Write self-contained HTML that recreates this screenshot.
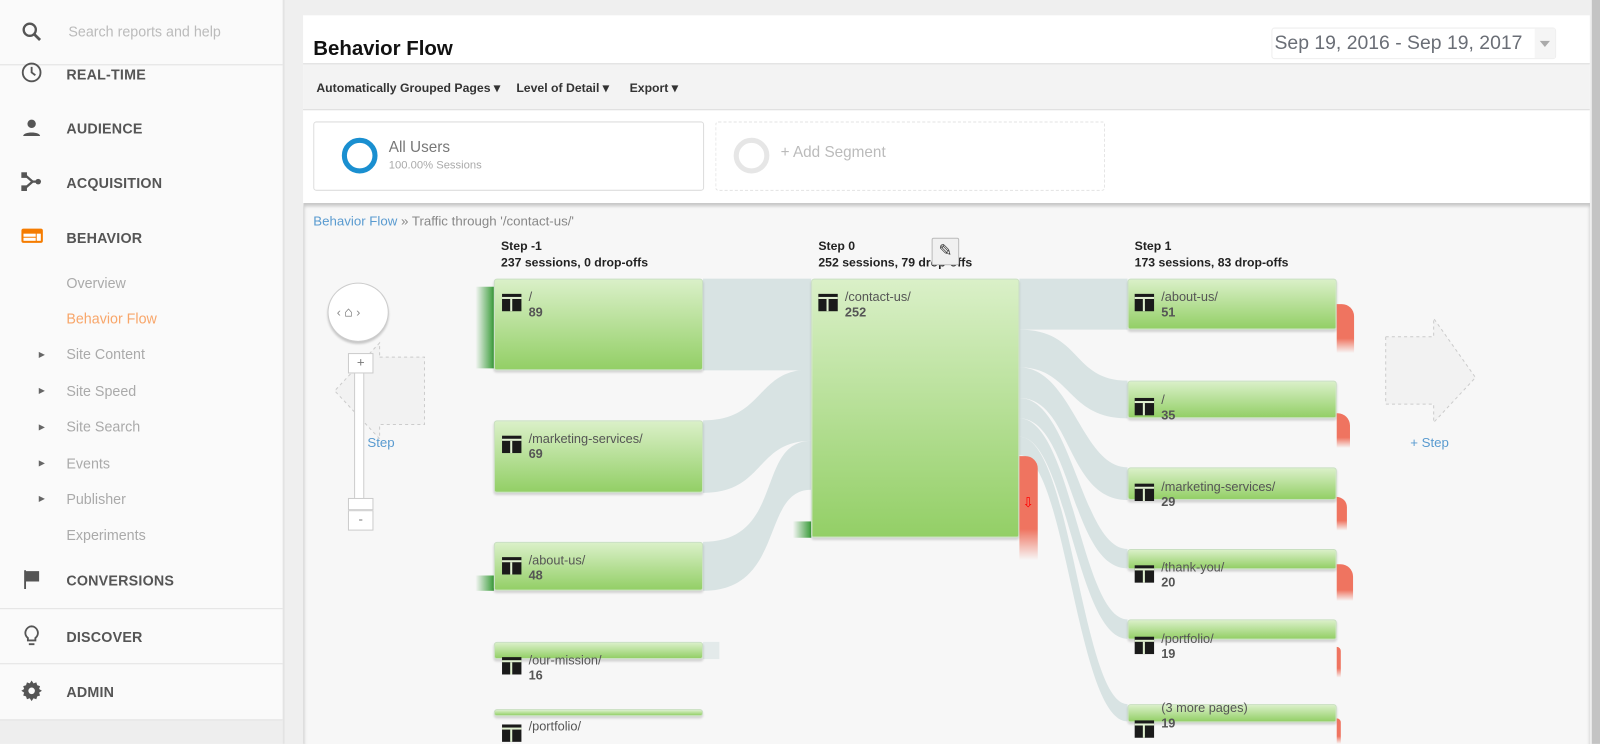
<!DOCTYPE html>
<html><head><meta charset="utf-8"><style>
*{box-sizing:border-box;margin:0;padding:0}
body{width:1600px;height:729px;overflow:hidden;background:#efefef;font-family:"Liberation Sans",sans-serif;position:relative}
#wrap{position:absolute;left:0;top:0;width:1568px;height:715px;transform:scale(1.0204);transform-origin:0 0}
.a{position:absolute}
#side{left:0;top:0;width:279px;height:729px;background:#fafafa;border-right:2px solid #e3e3e3}
.nav{position:absolute;left:65px;font-size:14px;font-weight:bold;color:#555;letter-spacing:.2px}
.sub{position:absolute;left:65px;font-size:14px;color:#aaa}
.tri{position:absolute;left:38px;font-size:8px;color:#666}
.hr{position:absolute;left:0;width:277px;height:1px;background:#e2e2e2}
.ic{position:absolute;left:20px}
.node{position:absolute;background:linear-gradient(#daf0c8,#93cf66);border:1px solid #c8dfc0;border-radius:3px;box-shadow:0 2px 2px rgba(0,0,0,.15)}
.lbl{position:absolute;font-size:12.5px;color:#555;line-height:15px}
.lbl b{color:#555}
.pi{position:absolute;width:19px;height:17px;background:#1a1a1a}
.pi:before{content:"";position:absolute;left:0;top:3px;width:19px;height:2px;background:#e0f0d0}
.pi:after{content:"";position:absolute;left:8px;top:5px;width:2px;height:12px;background:#e0f0d0}
.drop{position:absolute;background:linear-gradient(#ef7460 70%,rgba(239,116,96,0));border-radius:0 12px 0 0}
.hd{position:absolute;font-size:12px;font-weight:bold;color:#222;line-height:16px}
</style></head><body><div id="wrap">
<div id="side" class="a">
 <svg class="ic" style="top:20px" width="22" height="22" viewBox="0 0 24 24"><circle cx="10" cy="10" r="6.5" fill="none" stroke="#555" stroke-width="2.5"/><path d="M15 15l6 6" stroke="#555" stroke-width="3"/></svg>
 <div class="a" style="left:67px;top:23px;font-size:14px;color:#bbb">Search reports and help</div>
 <div class="hr" style="top:63px"></div>
 <svg class="ic" style="top:60px" width="22" height="22" viewBox="0 0 24 24"><circle cx="12" cy="12" r="9.5" fill="none" stroke="#555" stroke-width="2"/><path d="M12 6v6l4 3" stroke="#555" stroke-width="2" fill="none"/></svg>
 <div class="nav" style="top:65px">REAL-TIME</div>
 <svg class="ic" style="top:114px" width="22" height="22" viewBox="0 0 24 24"><circle cx="12" cy="8" r="4.5" fill="#555"/><path d="M3 21c0-5 18-5 18 0z" fill="#555"/></svg>
 <div class="nav" style="top:118px">AUDIENCE</div>
 <svg class="ic" style="top:167px" width="22" height="22" viewBox="0 0 24 24"><rect x="1" y="2" width="6" height="6" fill="#555"/><rect x="1" y="16" width="6" height="6" fill="#555"/><path d="M5 5l8 7-8 7M11 12h6" stroke="#555" stroke-width="2.5" fill="none"/><circle cx="19" cy="12" r="3" fill="#555"/></svg>
 <div class="nav" style="top:171px">ACQUISITION</div>
 <svg class="ic" style="top:222px" width="23" height="20" viewBox="0 0 23 20"><rect x="1" y="2" width="21" height="14" rx="2" fill="#f57c00"/><rect x="3" y="7" width="12" height="3" fill="#fff"/><rect x="3" y="11" width="12" height="3" fill="#fff"/><rect x="16" y="7" width="4" height="7" fill="#fff"/></svg>
 <div class="nav" style="top:225px">BEHAVIOR</div>
 <div class="sub" style="top:269px">Overview</div>
 <div class="sub" style="top:304px;color:#f8a66a">Behavior Flow</div>
 <div class="tri" style="top:343px">▶</div><div class="sub" style="top:339px">Site Content</div>
 <div class="tri" style="top:378px">▶</div><div class="sub" style="top:375px">Site Speed</div>
 <div class="tri" style="top:414px">▶</div><div class="sub" style="top:410px">Site Search</div>
 <div class="tri" style="top:449px">▶</div><div class="sub" style="top:446px">Events</div>
 <div class="tri" style="top:484px">▶</div><div class="sub" style="top:481px">Publisher</div>
 <div class="sub" style="top:516px">Experiments</div>
 <svg class="ic" style="top:557px" width="22" height="22" viewBox="0 0 24 24"><path d="M4 2h2v20H4zM6 3h14v11H6z" fill="#555"/></svg>
 <div class="nav" style="top:561px">CONVERSIONS</div>
 <div class="hr" style="top:596px"></div>
 <svg class="ic" style="top:612px" width="22" height="22" viewBox="0 0 24 24"><path d="M12 2a7 7 0 0 0-4 12.5V17h8v-2.5A7 7 0 0 0 12 2z" fill="none" stroke="#555" stroke-width="2"/><path d="M9 21h6" stroke="#555" stroke-width="2"/></svg>
 <div class="nav" style="top:616px">DISCOVER</div>
 <div class="hr" style="top:650px"></div>
 <svg class="ic" style="top:666px" width="22" height="22" viewBox="0 0 24 24"><path d="M12 1l2 3 3-1 1 3 3 1-1 3 3 2-3 2 1 3-3 1-1 3-3-1-2 3-2-3-3 1-1-3-3-1 1-3-3-2 3-2-1-3 3-1 1-3 3 1z" fill="#555"/><circle cx="12" cy="12" r="3.5" fill="#fafafa"/></svg>
 <div class="nav" style="top:670px">ADMIN</div>
 <div class="a" style="left:0;top:705px;width:277px;height:24px;background:#eee;border-top:1px solid #e2e2e2"></div>
</div>

<div class="a" style="left:1560px;top:0;width:8px;height:729px;background:#c4c4c4"></div>
<div class="a" style="left:297px;top:15px;width:1261px;height:714px;background:#fff">
 <div class="a" style="left:10px;top:22px;font-size:20px;font-weight:bold;color:#111">Behavior Flow</div>
 <div class="a" style="left:949px;top:12px;width:279px;height:31px;border:1px solid #eee;border-radius:3px;background:#fff"><div class="a" style="left:2px;top:4px;font-size:19px;color:#6a6e76;white-space:nowrap">Sep 19, 2016 - Sep 19, 2017</div><div class="a" style="right:0;top:0;width:20px;height:29px;background:#f5f5f5"></div><div class="a" style="right:5px;top:12px;border:5px solid transparent;border-top:6px solid #aaa"></div></div>
 <div class="a" style="left:0;top:47px;width:1261px;height:46px;background:#f3f3f3;border-top:1px solid #ddd;border-bottom:1px solid #ddd;font-size:12px;font-weight:bold;color:#333">
  <span class="a" style="left:13px;top:16px">Automatically Grouped Pages ▾</span>
  <span class="a" style="left:209px;top:16px">Level of Detail ▾</span>
  <span class="a" style="left:320px;top:16px">Export ▾</span>
 </div>
 <div class="a" style="left:10px;top:104px;width:383px;height:68px;border:1px solid #ddd;border-radius:3px"></div>
 <div class="a" style="left:38px;top:120px;width:35px;height:35px;border:5px solid #1a8fd0;border-radius:50%"></div>
 <div class="a" style="left:84px;top:121px;font-size:15px;color:#777">All Users</div>
 <div class="a" style="left:84px;top:141px;font-size:11px;color:#aaa">100.00% Sessions</div>
 <div class="a" style="left:404px;top:104px;width:382px;height:68px;border:1px dashed #e3e3e3;border-radius:3px"></div>
 <div class="a" style="left:422px;top:120px;width:35px;height:35px;border:5px solid #e6e6e6;border-radius:50%"></div>
 <div class="a" style="left:468px;top:126px;font-size:15px;color:#bbb">+ Add Segment</div>
</div>

<div class="a" style="left:297px;top:199px;width:1261px;height:530px;background:#f7f7f7;box-shadow:inset 0 3px 3px rgba(0,0,0,.2);border-left:1px solid #ddd">
</div>
<div class="a" style="left:307px;top:209px;font-size:13px;color:#888"><span style="color:#5a9bd0">Behavior Flow</span> » Traffic through '/contact-us/'</div>

<svg class="a" style="left:297px;top:200px" width="1263" height="529">
 <g transform="translate(-297,-200)" fill="#d8e3e3">
  <path d="M689 273H795V363H689z"/>
  <path d="M689 412C750 412 740 362 795 362V432C740 432 750 483 689 483z"/>
  <path d="M689 531C770 531 740 432 795 432V480C745 480 770 579 689 579z"/>
  <path d="M689 629H705V646H689z" fill="#e3eaea"/>
  <path d="M999 273H1105V323H999z"/>
  <path d="M999 323C1060 323 1050 373 1105 373V410C1045 410 1050 360 999 360z"/>
  <path d="M999 360C1050 360 1060 458 1105 458V490C1045 490 1050 390 999 390z"/>
  <path d="M999 390C1050 390 1060 538 1105 538V557C1050 557 1050 410 999 410z"/>
  <path d="M999 410C1050 410 1060 607 1105 607V626C1055 626 1045 428 999 428z"/>
  <path d="M999 428C1050 428 1060 690 1105 690V707C1055 707 1045 446 999 446z"/>
 </g>
 <g transform="translate(-297,-200)" fill="#f2f2f2" stroke="#ccc" stroke-dasharray="3,3">
  <path d="M372 350H416V416H372V430L328 383L372 336z"/>
  <path d="M1358 330H1405V312L1446 370L1405 414V396H1358z"/>
 </g>
</svg>

<div class="a" style="left:347px;top:355px;width:10px;height:160px;background:#fff;border:1px solid #ccc"></div>
<div class="a" style="left:321px;top:277px;width:60px;height:58px;border-radius:50%;background:#fff;border:1px solid #ccc;box-shadow:0 2px 2px rgba(0,0,0,.2)"></div>
<div class="a" style="left:330px;top:297px;font-size:12px;color:#888">‹ <span style="color:#666;font-size:14px">⌂</span> ›</div>
<div class="a" style="left:341px;top:346px;width:25px;height:20px;background:#fff;border:1px solid #ccc;text-align:center;font-size:13px;color:#777">+</div>
<div class="a" style="left:341px;top:488px;width:25px;height:12px;background:#fff;border:1px solid #ccc"></div>
<div class="a" style="left:341px;top:500px;width:25px;height:20px;background:#fff;border:1px solid #ccc;text-align:center;font-size:13px;color:#777">-</div>
<div class="a" style="left:360px;top:426px;font-size:13px;color:#5a9bd0">Step</div>
<div class="a" style="left:1382px;top:426px;font-size:13px;color:#5a9bd0">+ Step</div>

<div class="hd" style="left:491px;top:233px">Step -1<br>237 sessions, 0 drop-offs</div>
<div class="hd" style="left:802px;top:233px">Step 0<br>252 sessions, 79 drop-offs</div>
<div class="hd" style="left:1112px;top:233px">Step 1<br>173 sessions, 83 drop-offs</div>
<div class="a" style="left:913px;top:233px;width:27px;height:27px;border:1px solid #bbb;background:#f0f0f0;border-radius:2px;font-size:16px;text-align:center;line-height:25px;color:#333">✎</div>

<div class="a" style="left:466px;top:281px;width:18px;height:80px;background:linear-gradient(90deg,rgba(60,160,60,0),#3a9c3a)"></div>
<div class="a" style="left:466px;top:564px;width:18px;height:15px;background:linear-gradient(90deg,rgba(60,160,60,0),#3a9c3a)"></div>
<div class="a" style="left:777px;top:511px;width:18px;height:16px;background:linear-gradient(90deg,rgba(60,160,60,0),#3a9c3a)"></div>

<div class="node" style="left:484px;top:273px;width:205px;height:90px"></div>
<div class="pi" style="left:492px;top:288px"></div><div class="lbl" style="left:518px;top:284px">/<br><b>89</b></div>
<div class="node" style="left:484px;top:412px;width:205px;height:71px"></div>
<div class="pi" style="left:492px;top:427px"></div><div class="lbl" style="left:518px;top:423px">/marketing-services/<br><b>69</b></div>
<div class="node" style="left:484px;top:531px;width:205px;height:48px"></div>
<div class="pi" style="left:492px;top:546px"></div><div class="lbl" style="left:518px;top:542px">/about-us/<br><b>48</b></div>
<div class="node" style="left:484px;top:629px;width:205px;height:17px"></div>
<div class="pi" style="left:492px;top:644px"></div><div class="lbl" style="left:518px;top:640px">/our-mission/<br><b>16</b></div>
<div class="node" style="left:484px;top:695px;width:205px;height:7px"></div>
<div class="pi" style="left:492px;top:710px"></div><div class="lbl" style="left:518px;top:705px">/portfolio/</div>

<div class="node" style="left:795px;top:273px;width:204px;height:254px"></div>
<div class="pi" style="left:802px;top:288px"></div><div class="lbl" style="left:828px;top:284px">/contact-us/<br><b>252</b></div>
<div class="drop" style="left:999px;top:447px;width:18px;height:102px"></div>
<div class="a" style="left:1002px;top:485px;color:#f00;font-size:13px">⇩</div>

<div class="node" style="left:1105px;top:273px;width:205px;height:50px"></div>
<div class="pi" style="left:1112px;top:288px"></div><div class="lbl" style="left:1138px;top:284px">/about-us/<br><b>51</b></div>
<div class="drop" style="left:1310px;top:298px;width:17px;height:48px"></div>
<div class="node" style="left:1105px;top:373px;width:205px;height:37px"></div>
<div class="pi" style="left:1112px;top:390px"></div><div class="lbl" style="left:1138px;top:385px">/<br><b>35</b></div>
<div class="drop" style="left:1310px;top:405px;width:13px;height:34px"></div>
<div class="node" style="left:1105px;top:458px;width:205px;height:32px"></div>
<div class="pi" style="left:1112px;top:474px"></div><div class="lbl" style="left:1138px;top:470px">/marketing-services/<br><b>29</b></div>
<div class="drop" style="left:1310px;top:487px;width:10px;height:33px"></div>
<div class="node" style="left:1105px;top:538px;width:205px;height:20px"></div>
<div class="pi" style="left:1112px;top:554px"></div><div class="lbl" style="left:1138px;top:549px">/thank-you/<br><b>20</b></div>
<div class="drop" style="left:1310px;top:553px;width:16px;height:36px"></div>
<div class="node" style="left:1105px;top:607px;width:205px;height:20px"></div>
<div class="pi" style="left:1112px;top:624px"></div><div class="lbl" style="left:1138px;top:619px">/portfolio/<br><b>19</b></div>
<div class="drop" style="left:1310px;top:634px;width:4px;height:30px"></div>
<div class="node" style="left:1105px;top:690px;width:205px;height:18px"></div>
<div class="pi" style="left:1112px;top:706px"></div><div class="lbl" style="left:1138px;top:687px">(3 more pages)<br><b>19</b></div>
<div class="drop" style="left:1310px;top:704px;width:4px;height:25px"></div>
</div></body></html>
